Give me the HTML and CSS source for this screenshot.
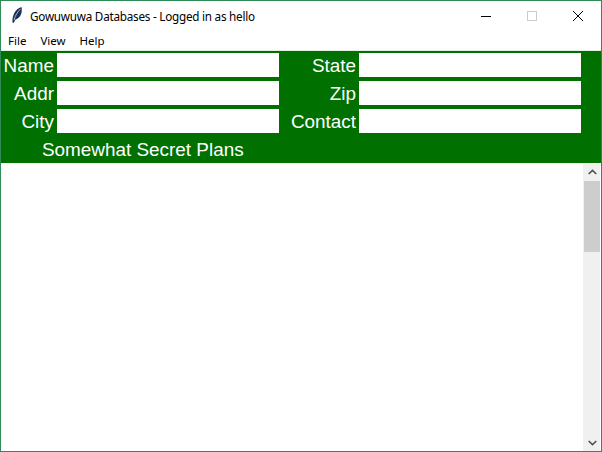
FILE: index.html
```html
<!DOCTYPE html>
<html lang="en">
<head>
<meta charset="utf-8">
<title>Gowuwuwa Databases</title>
<link rel="stylesheet" href="styles.css">
</head>
<body>
<div class="window">
  <header class="titlebar">
    <svg class="feather" width="16" height="18" viewBox="0 0 16 18">
      <path d="M3.5 16.5C3 10 6 3 12.5 1C13.5 6 12 12 6.5 13.5L4.6 17Z" fill="#1d2f52"/>
      <path d="M5 14C6.5 9 8.5 6 11.5 3" stroke="#a9bcdc" stroke-width="1" fill="none"/>
    </svg>
    <span class="title">Gowuwuwa Databases - Logged in as hello</span>
    <div class="controls">
      <span class="ctl"><svg width="12" height="12" viewBox="0 0 12 12"><path d="M1 6.5H11" stroke="#000"/></svg></span>
      <span class="ctl"><svg width="12" height="12" viewBox="0 0 12 12"><rect x="1.5" y="1.5" width="9" height="9" fill="none" stroke="#ccc"/></svg></span>
      <span class="ctl"><svg width="12" height="12" viewBox="0 0 12 12"><path d="M1 1L11 11M11 1L1 11" stroke="#000"/></svg></span>
    </div>
  </header>
  <nav class="menubar"><span>File</span><span>View</span><span>Help</span></nav>
  <section class="form">
    <label class="lbl">Name</label><div class="field"></div>
    <label class="lbl">State</label><div class="field"></div>
    <label class="lbl">Addr</label><div class="field"></div>
    <label class="lbl">Zip</label><div class="field"></div>
    <label class="lbl">City</label><div class="field"></div>
    <label class="lbl">Contact</label><div class="field"></div>
    <div class="plans">Somewhat Secret Plans</div>
  </section>
  <main class="content">
    <div class="textarea"></div>
    <div class="scrollbar">
      <div class="arrow"><svg width="9" height="6" viewBox="0 0 9 6"><path d="M0.7 5L4.5 1.4L8.3 5" fill="none" stroke="#505050" stroke-width="1.6"/></svg></div>
      <div class="track"><div class="thumb"></div></div>
      <div class="arrow"><svg width="9" height="6" viewBox="0 0 9 6"><path d="M0.7 1L4.5 4.6L8.3 1" fill="none" stroke="#505050" stroke-width="1.6"/></svg></div>
    </div>
  </main>
</div>
</body>
</html>
```
FILE: styles.css
```css
* { box-sizing: border-box; }
html, body { margin: 0; padding: 0; }
body { width: 602px; height: 452px; overflow: hidden; background: #fff; }
.window {
  width: 602px; height: 452px;
  border: 1px solid #2e8b57;
  display: flex; flex-direction: column;
  background: #fff;
}
.titlebar {
  height: 29px; flex: none;
  display: flex; align-items: center;
  padding-left: 8px;
  font: 11.7px "Noto Sans", sans-serif;
  color: #000;
}
.feather { flex: none; margin-top: -1px; }
.title { margin-left: 5px; white-space: nowrap; letter-spacing: -0.02em; }
.controls { margin-left: auto; display: flex; }
.ctl { width: 46px; height: 29px; display: flex; align-items: center; justify-content: center; }
.menubar {
  height: 21px; flex: none;
  display: flex; gap: 14px; align-items: center;
  padding-left: 7px;
  font: 11.5px "Noto Sans", sans-serif;
  color: #000;
  border-bottom: 1px solid #dff0df;
}
.form {
  height: 112px; flex: none;
  background: #007000;
  display: grid;
  grid-template-columns: 53px 222px 74px 222px;
  grid-auto-rows: 24px;
  column-gap: 3px;
  row-gap: 4px;
  padding-top: 2px;
  align-content: start;
  color: #fff;
  font: 18.9px/24px "Liberation Sans", sans-serif;
}
.lbl { text-align: right; white-space: nowrap; padding-top: 1px; line-height: 23px; height: 24px; }
.field { background: #fff; }
.plans { grid-column: 1 / 3; padding-left: 41px; margin-top: 1px; white-space: nowrap; }
.content { flex: 1; display: flex; min-height: 0; }
.textarea { flex: 1; background: #fff; border-top: 1px solid #f4f8f4; }
.scrollbar { width: 17px; margin-right: 1px; flex: none; display: flex; flex-direction: column; background: #f0f0f0; border-left: 1px solid #f0f0f0; }
.arrow { height: 17px; flex: none; display: flex; align-items: center; justify-content: center; }
.track { flex: 1; padding-top: 1px; }
.thumb { height: 71px; background: #cdcdcd; }
```
